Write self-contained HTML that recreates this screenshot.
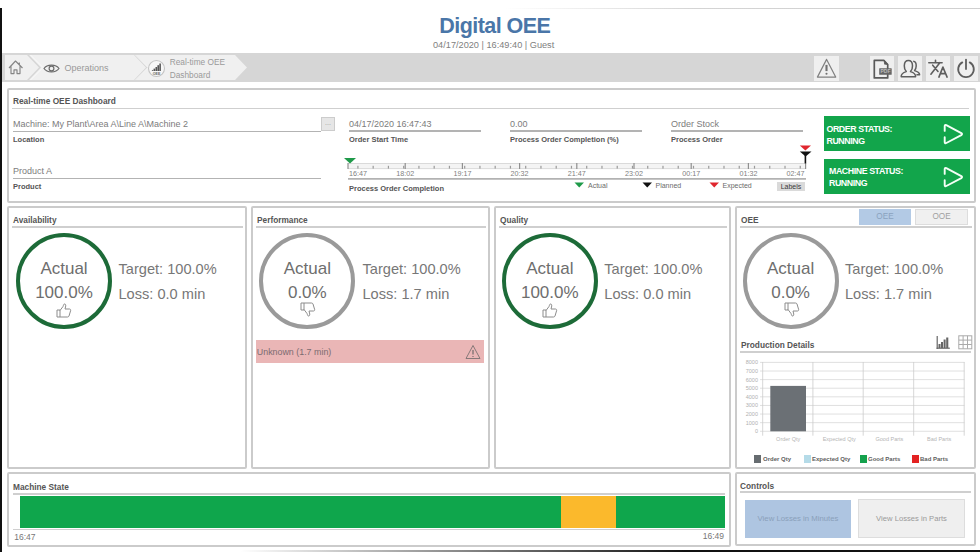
<!DOCTYPE html>
<html><head><meta charset="utf-8">
<style>
*{margin:0;padding:0;box-sizing:border-box}
html,body{width:980px;height:560px;overflow:hidden;background:#fff}
body{position:relative;font-family:"Liberation Sans",sans-serif;color:#707070}
.a{position:absolute;white-space:nowrap}
.pn{position:absolute;border:2px solid #cbcbcb;border-radius:2px;background:#fff}
.hd{position:absolute;font-weight:bold;font-size:8.3px;color:#555}
.ul{position:absolute;height:2px;background:#cfcfcf}
.lbl{position:absolute;font-weight:bold;font-size:7.5px;color:#555;white-space:nowrap}
.val{position:absolute;font-size:9px;color:#7c7c7c;white-space:nowrap}
.ibtn{position:absolute;top:56px;width:25px;height:25px;background:#efefef}
</style></head><body>

<!-- left black bar & bottom line -->
<div class="a" style="left:0;top:8px;width:2px;height:544px;background:#111"></div>
<div class="a" style="left:240px;top:550px;width:740px;height:2px;background:linear-gradient(90deg,rgba(0,0,0,0),#111 60%)"></div>

<div class="a" style="left:505px;top:8px;width:475px;height:1px;background:linear-gradient(90deg,rgba(200,200,200,0),#d4d4d4 40%,#d0d0d0)"></div>
<!-- title -->
<div class="a" style="left:439.3px;top:14px;font-size:21.5px;letter-spacing:-0.55px;font-weight:bold;color:#4a76a8">Digital OEE</div>
<div class="a" style="left:433px;top:40.3px;font-size:9.2px;color:#808080">04/17/2020 | 16:49:40 | Guest</div>

<!-- toolbar -->
<div class="a" style="left:2px;top:53px;width:978px;height:29px;background:#d6d6d6"></div>
<svg class="a" style="left:5px;top:55px" width="245" height="25" viewBox="0 0 245 25">
  <path d="M0 0 H22 L34 12.5 L22 25 H0 Z" fill="#f0f0f0"/>
  <path d="M24 0 H129 L141 12.5 L129 25 H24 L36 12.5 Z" fill="#f0f0f0"/>
  <path d="M131 0 H230 L242 12.5 L230 25 H131 L143 12.5 Z" fill="#f0f0f0"/>
  <path d="M25.5 0 L38 12.5 L25.5 25 M130.5 0 L143 12.5 L130.5 25" fill="none" stroke="#fafafa" stroke-width="1"/>
</svg>
<!-- home icon -->
<svg class="a" style="left:7px;top:59px" width="18" height="17" viewBox="0 0 18 17" fill="none" stroke="#858585" stroke-width="1.15" stroke-linejoin="round">
  <path d="M2 9 L8.5 2 L15.5 9 M4 7.3 V14.6 H7 V10.8 H10 V14.6 H13 V7.3 M12.3 3.6 V5.6"/>
</svg>
<!-- eye icon -->
<svg class="a" style="left:43px;top:62.5px" width="17" height="11" viewBox="0 0 17 11" fill="none" stroke="#6a6a6a" stroke-width="1.15">
  <path d="M1 5.5 C4 1 13 1 16 5.5 C13 10 4 10 1 5.5 Z"/><circle cx="8.5" cy="5.5" r="2.4"/>
</svg>
<div class="a" style="left:64.5px;top:63px;font-size:9px;color:#999">Operations</div>
<!-- oee icon -->
<svg class="a" style="left:147px;top:58.5px" width="19" height="19" viewBox="0 0 19 19">
  <circle cx="9.5" cy="9.5" r="8" fill="#f7f7f7" stroke="#c4c4c4" stroke-width="1.1"/>
  <path d="M4.5 12 L6.3 10.6 V12 Z" fill="#555"/>
  <rect x="6.6" y="9.6" width="1.6" height="2.4" fill="#555"/><rect x="8.5" y="8" width="1.6" height="4" fill="#555"/>
  <rect x="10.4" y="6.2" width="1.6" height="5.8" fill="#555"/><rect x="12.3" y="4.5" width="1.6" height="7.5" fill="#555"/>
  <text x="9.5" y="15.6" font-size="3.6" font-weight="bold" text-anchor="middle" fill="#666" font-family="Liberation Sans">OEE</text>
</svg>
<div class="a" style="left:169.7px;top:55.5px;font-size:8.3px;line-height:13.2px;color:#9a9a9a">Real-time OEE<br>Dashboard</div>

<!-- right icons -->
<div class="ibtn" style="left:814.3px;width:24.8px;height:24.6px"></div>
<svg class="a" style="left:814.3px;top:56px" width="25" height="25" viewBox="0 0 25 25" fill="none" stroke="#808080" stroke-width="1.2">
  <path d="M12.6 3.4 L21.7 21.1 H3.4 Z" stroke-linejoin="round"/><path d="M12.5 8.9 L12.5 15.1" stroke-width="2.1" stroke="#707070"/><circle cx="12.5" cy="17.8" r="1.05" fill="#707070" stroke="none"/>
</svg>
<div class="ibtn" style="left:869.7px;width:24.2px;height:24.8px"></div>
<svg class="a" style="left:870px;top:56px" width="25" height="25" viewBox="0 0 25 25" fill="none" stroke="#5a5a5a" stroke-width="1.7">
  <path d="M4.3 4.3 H13.8 L17.7 8.6 V21.9 H4.3 Z" stroke-linejoin="round"/>
  <path d="M14.2 4.6 L17.4 8.2 L14.6 8.2 Z" fill="#5a5a5a" stroke-width="0.8"/>
  <rect x="9.2" y="12.2" width="12.5" height="6.5" fill="#666" stroke="none" rx="0.5"/>
  <text x="15.45" y="17.4" font-size="5" font-weight="bold" text-anchor="middle" fill="#bbb" stroke="none" font-family="Liberation Sans">PDF</text>
</svg>
<div class="ibtn" style="left:897.8px;width:24.2px;height:24.8px"></div>
<svg class="a" style="left:898px;top:56px" width="25" height="25" viewBox="0 0 25 25" fill="none" stroke="#5e5e5e" stroke-width="1.5" stroke-linejoin="round">
  <path d="M3.2 20.8 C3 18 4.5 16.8 8.3 15.6 C6.8 14 6.2 12 6.3 9.8 C6.4 6.3 8.2 4.6 10.4 4.6 C12.6 4.6 14.4 6.3 14.5 9.8 C14.6 12 14 14 12.5 15.6 C16.3 16.8 17.8 18 17.6 20.8 Z"/>
  <path d="M15.2 5.3 C17 5.5 18.3 7.2 18.2 10 C18.1 12 17.6 13.5 16.6 14.6 C19.8 15.6 21.6 16.6 21.6 18.7 H18.4"/>
</svg>
<div class="ibtn" style="left:925.8px;width:24.3px;height:24.9px"></div>
<svg class="a" style="left:926px;top:56px" width="25" height="25" viewBox="0 0 25 25" fill="none" stroke="#5e5e5e" stroke-width="1.6" stroke-linecap="round">
  <path d="M2.8 6.7 H16.1 M9.5 4.3 V6.7 M13.8 6.7 L4.9 18.2 M6.7 9.2 L12 15.5"/>
  <path d="M12.9 21.1 L16.9 11.1 L21.1 21.1 M14.4 17.6 H19.5" stroke-linejoin="round"/>
</svg>
<div class="ibtn" style="left:953.7px;width:24.5px;height:24.9px"></div>
<svg class="a" style="left:954px;top:56px" width="25" height="25" viewBox="0 0 25 25" fill="none" stroke="#5e5e5e" stroke-width="1.8" stroke-linecap="round">
  <path d="M8.3 6.4 A7.8 7.8 0 1 0 15.7 6.4"/><path d="M12 3.6 V13"/>
</svg>

<!-- TOP PANEL -->
<div class="pn" style="left:7px;top:87.5px;width:969px;height:115px"></div>


<div class="hd" style="left:13px;top:96px">Real-time OEE Dashboard</div>
<div class="ul" style="left:12px;top:107.8px;width:957px;height:1.5px"></div>
<div class="val" style="left:13px;top:119px">Machine: My Plant\Area A\Line A\Machine 2</div>
<div class="a" style="left:13px;top:130.6px;width:308px;height:1.3px;background:#b3b3b3"></div>
<div class="a" style="left:321px;top:117px;width:14px;height:14px;background:#e6e6e6;border:1px solid #ccc;font-size:7px;color:#999;text-align:center;line-height:9px">...</div>
<div class="lbl" style="left:13px;top:135px">Location</div>
<div class="val" style="left:13px;top:166px">Product A</div>
<div class="a" style="left:13px;top:178.2px;width:308px;height:1.3px;background:#b3b3b3"></div>
<div class="lbl" style="left:13px;top:182px">Product</div>

<div class="val" style="left:349px;top:119px">04/17/2020 16:47:43</div>
<div class="a" style="left:349px;top:130.3px;width:132px;height:1.3px;background:#b3b3b3"></div>
<div class="lbl" style="left:349px;top:135px">Order Start Time</div>
<div class="val" style="left:510px;top:119px">0.00</div>
<div class="a" style="left:510px;top:130.3px;width:132px;height:1.3px;background:#b3b3b3"></div>
<div class="lbl" style="left:510px;top:135px">Process Order Completion (%)</div>
<div class="val" style="left:671px;top:119px">Order Stock</div>
<div class="a" style="left:671px;top:130.3px;width:132px;height:1.3px;background:#b3b3b3"></div>
<div class="lbl" style="left:671px;top:135px">Process Order</div>

<!-- timeline -->
<svg class="a" style="left:340px;top:143px" width="480" height="40" viewBox="0 0 480 40">
  <rect x="8" y="20.4" width="457.6" height="5.2" fill="#f4f4f4"/>
  <rect x="8" y="20" width="457.6" height="0.9" fill="#d6d6d6"/>
  <rect x="8" y="25.2" width="457.6" height="0.9" fill="#d6d6d6"/>
  <rect x="7.40" y="20" width="1.2" height="6" fill="#909090"/><rect x="64.60" y="20" width="1.2" height="6" fill="#909090"/><rect x="121.80" y="20" width="1.2" height="6" fill="#909090"/><rect x="179.00" y="20" width="1.2" height="6" fill="#909090"/><rect x="236.20" y="20" width="1.2" height="6" fill="#909090"/><rect x="293.40" y="20" width="1.2" height="6" fill="#909090"/><rect x="350.60" y="20" width="1.2" height="6" fill="#909090"/><rect x="407.80" y="20" width="1.2" height="6" fill="#909090"/><rect x="465.00" y="20" width="1.2" height="6" fill="#909090"/><rect x="17.31" y="22.8" width="1.2" height="2.8" fill="#9a9a9a"/><rect x="32.57" y="22.8" width="1.2" height="2.8" fill="#9a9a9a"/><rect x="47.82" y="22.8" width="1.2" height="2.8" fill="#9a9a9a"/><rect x="63.07" y="22.8" width="1.2" height="2.8" fill="#9a9a9a"/><rect x="78.33" y="22.8" width="1.2" height="2.8" fill="#9a9a9a"/><rect x="93.58" y="22.8" width="1.2" height="2.8" fill="#9a9a9a"/><rect x="108.83" y="22.8" width="1.2" height="2.8" fill="#9a9a9a"/><rect x="124.09" y="22.8" width="1.2" height="2.8" fill="#9a9a9a"/><rect x="139.34" y="22.8" width="1.2" height="2.8" fill="#9a9a9a"/><rect x="154.59" y="22.8" width="1.2" height="2.8" fill="#9a9a9a"/><rect x="169.85" y="22.8" width="1.2" height="2.8" fill="#9a9a9a"/><rect x="185.10" y="22.8" width="1.2" height="2.8" fill="#9a9a9a"/><rect x="200.35" y="22.8" width="1.2" height="2.8" fill="#9a9a9a"/><rect x="215.61" y="22.8" width="1.2" height="2.8" fill="#9a9a9a"/><rect x="230.86" y="22.8" width="1.2" height="2.8" fill="#9a9a9a"/><rect x="246.11" y="22.8" width="1.2" height="2.8" fill="#9a9a9a"/><rect x="261.37" y="22.8" width="1.2" height="2.8" fill="#9a9a9a"/><rect x="276.62" y="22.8" width="1.2" height="2.8" fill="#9a9a9a"/><rect x="291.87" y="22.8" width="1.2" height="2.8" fill="#9a9a9a"/><rect x="307.13" y="22.8" width="1.2" height="2.8" fill="#9a9a9a"/><rect x="322.38" y="22.8" width="1.2" height="2.8" fill="#9a9a9a"/><rect x="337.63" y="22.8" width="1.2" height="2.8" fill="#9a9a9a"/><rect x="352.89" y="22.8" width="1.2" height="2.8" fill="#9a9a9a"/><rect x="368.14" y="22.8" width="1.2" height="2.8" fill="#9a9a9a"/><rect x="383.39" y="22.8" width="1.2" height="2.8" fill="#9a9a9a"/><rect x="398.65" y="22.8" width="1.2" height="2.8" fill="#9a9a9a"/><rect x="413.90" y="22.8" width="1.2" height="2.8" fill="#9a9a9a"/><rect x="429.15" y="22.8" width="1.2" height="2.8" fill="#9a9a9a"/><rect x="444.41" y="22.8" width="1.2" height="2.8" fill="#9a9a9a"/><rect x="459.66" y="22.8" width="1.2" height="2.8" fill="#9a9a9a"/>
  <rect x="8" y="35.2" width="458" height="1.4" fill="#a0a0a0"/>
  <path d="M4 15 H16 L10 20.5 Z" fill="#1f9a4a"/>
  <path d="M459.8 2.4 H471 L465.4 7.6 Z" fill="#e0262e"/>
  <path d="M459.8 8.6 H471.5 L465.6 13.4 Z" fill="#111"/>
  <rect x="464.6" y="12" width="1.6" height="8.4" fill="#111"/>
</svg>
<div class="a" style="left:349px;top:168.9px;font-size:7.2px;color:#808080">16:47</div><div class="a" style="left:405.2px;top:168.9px;font-size:7.2px;color:#808080;transform:translateX(-50%)">18:02</div><div class="a" style="left:462.4px;top:168.9px;font-size:7.2px;color:#808080;transform:translateX(-50%)">19:17</div><div class="a" style="left:519.6px;top:168.9px;font-size:7.2px;color:#808080;transform:translateX(-50%)">20:32</div><div class="a" style="left:576.8px;top:168.9px;font-size:7.2px;color:#808080;transform:translateX(-50%)">21:47</div><div class="a" style="left:634.0px;top:168.9px;font-size:7.2px;color:#808080;transform:translateX(-50%)">23:02</div><div class="a" style="left:691.2px;top:168.9px;font-size:7.2px;color:#808080;transform:translateX(-50%)">00:17</div><div class="a" style="left:748.4px;top:168.9px;font-size:7.2px;color:#808080;transform:translateX(-50%)">01:32</div><div class="a" style="left:804.6px;top:168.9px;font-size:7.2px;color:#808080;transform:translateX(-100%)">02:47</div>
<div class="lbl" style="left:349px;top:184px">Process Order Completion</div>
<svg class="a" style="left:574px;top:182px" width="12" height="6"><path d="M0.5 0.5 H10 L5.25 5.5 Z" fill="#1f9a4a"/></svg>
<div class="a" style="left:588px;top:181.8px;font-size:7px;color:#6a6a6a">Actual</div>
<svg class="a" style="left:642px;top:182px" width="12" height="6"><path d="M0.5 0.5 H10 L5.25 5.5 Z" fill="#111"/></svg>
<div class="a" style="left:655.5px;top:181.8px;font-size:7px;color:#6a6a6a">Planned</div>
<svg class="a" style="left:709px;top:182px" width="12" height="6"><path d="M0.5 0.5 H10 L5.25 5.5 Z" fill="#e0262e"/></svg>
<div class="a" style="left:722.5px;top:181.8px;font-size:7px;color:#6a6a6a">Expected</div>
<div class="a" style="left:777px;top:182.3px;width:28px;height:9px;background:#dadada;font-size:7px;color:#3a3a3a;text-align:center;line-height:9px">Labels</div>

<!-- status -->
<div class="a" style="left:824px;top:116.2px;width:146.3px;height:35px;background:#12a54b"></div>
<div class="a" style="left:826.5px;top:122.6px;font-size:8.8px;letter-spacing:-0.42px;line-height:12px;font-weight:bold;color:#fff">ORDER STATUS:<br>RUNNING</div>
<svg class="a" style="left:941px;top:122px" width="24" height="24" viewBox="0 0 24 24" fill="none" stroke="#f4fff6" stroke-width="1.9" stroke-linejoin="round" stroke-linecap="round"><path d="M3.7 8.9 V4.2 Q3.7 2.4 5.3 3.2 L20.3 11.1 Q21.8 12.1 20.3 13.1 L5.3 21 Q3.7 21.8 3.7 20 V15.2"/></svg>
<div class="a" style="left:824px;top:158.9px;width:146.3px;height:35px;background:#12a54b"></div>
<div class="a" style="left:829px;top:164.5px;font-size:8.8px;letter-spacing:-0.42px;line-height:12px;font-weight:bold;color:#fff">MACHINE STATUS:<br>RUNNING</div>
<svg class="a" style="left:941px;top:165px" width="24" height="24" viewBox="0 0 24 24" fill="none" stroke="#f4fff6" stroke-width="1.9" stroke-linejoin="round" stroke-linecap="round"><path d="M3.7 8.9 V4.2 Q3.7 2.4 5.3 3.2 L20.3 11.1 Q21.8 12.1 20.3 13.1 L5.3 21 Q3.7 21.8 3.7 20 V15.2"/></svg>
<div class="pn" style="left:7px;top:206px;width:240px;height:263px"></div>
<div class="hd" style="left:13px;top:215px">Availability</div>
<div class="ul" style="left:12px;top:225.5px;width:231px"></div>
<div class="a" style="left:16px;top:233px;width:96px;height:96px;border-radius:50%;border:4.5px solid #1d6b38"></div>
<div class="a" style="left:24px;top:257px;width:80px;text-align:center;font-size:17px;line-height:23.7px;color:#6e6e6e">Actual<br>100.0%</div>
<svg class="a" style="left:56px;top:303px" width="16" height="16" viewBox="0 0 16 16" fill="none" stroke="#8c8c8c" stroke-width="1" stroke-linejoin="round"><path d="M1 7 H4 V14 H1 Z M4 7.5 L7 3.5 C7.5 2.5 7.5 1 8.5 1 C9.8 1 10 2.5 9.5 4 L9 6 H13.5 C14.5 6 15 7 14.5 8 L13 13 C12.7 13.7 12.2 14 11.5 14 H4"/></svg>
<div class="a" style="left:118.5px;top:256.7px;font-size:14.6px;line-height:25.5px;color:#777">Target: 100.0%<br>Loss: 0.0 min</div>
<div class="pn" style="left:251px;top:206px;width:239px;height:263px"></div>
<div class="hd" style="left:257px;top:215px">Performance</div>
<div class="ul" style="left:256px;top:225.5px;width:230px"></div>
<div class="a" style="left:258.6px;top:233px;width:96px;height:96px;border-radius:50%;border:4.5px solid #9a9a9a"></div>
<div class="a" style="left:267.3px;top:257px;width:80px;text-align:center;font-size:17px;line-height:23.7px;color:#6e6e6e">Actual<br>0.0%</div>
<svg class="a" style="left:300px;top:302px" width="16" height="16" viewBox="0 0 16 16" fill="none" stroke="#8c8c8c" stroke-width="1" stroke-linejoin="round"><g transform="translate(0,15) scale(1,-1)"><path d="M1 7 H4 V14 H1 Z M4 7.5 L7 3.5 C7.5 2.5 7.5 1 8.5 1 C9.8 1 10 2.5 9.5 4 L9 6 H13.5 C14.5 6 15 7 14.5 8 L13 13 C12.7 13.7 12.2 14 11.5 14 H4"/></g></svg>
<div class="a" style="left:362.5px;top:256.7px;font-size:14.6px;line-height:25.5px;color:#777">Target: 100.0%<br>Loss: 1.7 min</div>
<div class="pn" style="left:494px;top:206px;width:237px;height:263px"></div>
<div class="hd" style="left:500px;top:215px">Quality</div>
<div class="ul" style="left:499px;top:225.5px;width:228px"></div>
<div class="a" style="left:501.6px;top:233px;width:96px;height:96px;border-radius:50%;border:4.5px solid #1d6b38"></div>
<div class="a" style="left:509.8px;top:257px;width:80px;text-align:center;font-size:17px;line-height:23.7px;color:#6e6e6e">Actual<br>100.0%</div>
<svg class="a" style="left:542px;top:303px" width="16" height="16" viewBox="0 0 16 16" fill="none" stroke="#8c8c8c" stroke-width="1" stroke-linejoin="round"><path d="M1 7 H4 V14 H1 Z M4 7.5 L7 3.5 C7.5 2.5 7.5 1 8.5 1 C9.8 1 10 2.5 9.5 4 L9 6 H13.5 C14.5 6 15 7 14.5 8 L13 13 C12.7 13.7 12.2 14 11.5 14 H4"/></svg>
<div class="a" style="left:604.3px;top:256.7px;font-size:14.6px;line-height:25.5px;color:#777">Target: 100.0%<br>Loss: 0.0 min</div>
<div class="pn" style="left:735px;top:206px;width:241px;height:263px"></div>
<div class="hd" style="left:741px;top:215px">OEE</div>
<div class="ul" style="left:740px;top:225.5px;width:232px"></div>
<div class="a" style="left:742.8px;top:233px;width:96px;height:96px;border-radius:50%;border:4.5px solid #9a9a9a"></div>
<div class="a" style="left:750.6px;top:257px;width:80px;text-align:center;font-size:17px;line-height:23.7px;color:#6e6e6e">Actual<br>0.0%</div>
<svg class="a" style="left:783.5px;top:302px" width="16" height="16" viewBox="0 0 16 16" fill="none" stroke="#8c8c8c" stroke-width="1" stroke-linejoin="round"><g transform="translate(0,15) scale(1,-1)"><path d="M1 7 H4 V14 H1 Z M4 7.5 L7 3.5 C7.5 2.5 7.5 1 8.5 1 C9.8 1 10 2.5 9.5 4 L9 6 H13.5 C14.5 6 15 7 14.5 8 L13 13 C12.7 13.7 12.2 14 11.5 14 H4"/></g></svg>
<div class="a" style="left:845px;top:256.7px;font-size:14.6px;line-height:25.5px;color:#777">Target: 100.0%<br>Loss: 1.7 min</div>
<div class="a" style="left:256px;top:339.5px;width:228px;height:23px;background:#eab6b6"></div>
<div class="a" style="left:256.8px;top:346.8px;font-size:8.9px;color:#7b6b70">Unknown (1.7 min)</div>
<svg class="a" style="left:465px;top:344px" width="16" height="16" viewBox="0 0 16 16" fill="none" stroke="#7a7070" stroke-width="0.9"><path d="M8 1.5 L15 14.5 H1 Z" stroke-linejoin="round"/><path d="M8 6 V10.5" stroke-width="1.3"/><circle cx="8" cy="12.5" r="0.6" fill="#555" stroke="none"/></svg>
<div class="a" style="left:859px;top:208.5px;width:52px;height:16px;background:#b3cae5;font-size:8.2px;color:#8aa2be;text-align:center;line-height:16px">OEE</div>
<div class="a" style="left:915px;top:208.5px;width:53px;height:16px;background:#f0f0f0;border:1px solid #ddd;font-size:8.2px;color:#a0a0a0;text-align:center;line-height:14px">OOE</div>
<div class="hd" style="left:741px;top:340px">Production Details</div>
<div class="ul" style="left:740px;top:350.5px;width:231px"></div>
<svg class="a" style="left:936px;top:335px" width="15" height="15" viewBox="0 0 15 15" fill="#666"><rect x="0.6" y="1" width="1.2" height="13"/><rect x="0.6" y="12.6" width="13.2" height="1.2"/><rect x="2.5" y="9" width="2" height="4"/><rect x="5" y="7" width="2" height="6"/><rect x="7.6" y="4.5" width="2" height="8.5"/><rect x="10.2" y="2.5" width="2.1" height="10.5"/></svg>
<svg class="a" style="left:958px;top:335px" width="15" height="15" viewBox="0 0 15 15" fill="none" stroke="#aaa" stroke-width="1"><rect x="0.8" y="0.8" width="13" height="13"/><path d="M5.1 0.8 V13.8 M9.5 0.8 V13.8 M0.8 5.1 H13.8 M0.8 9.5 H13.8"/></svg>
<svg class="a" style="left:740px;top:355px" width="235" height="90" viewBox="0 0 235 90"><line x1="20" y1="7.40" x2="224.5" y2="7.40" stroke="#d8d8d8" stroke-width="0.8"/><text x="18" y="9.40" font-size="5.5" text-anchor="end" fill="#b0b0b0" font-family="Liberation Sans">8000</text><line x1="20" y1="16.01" x2="224.5" y2="16.01" stroke="#d8d8d8" stroke-width="0.8"/><text x="18" y="18.01" font-size="5.5" text-anchor="end" fill="#b0b0b0" font-family="Liberation Sans">7000</text><line x1="20" y1="24.62" x2="224.5" y2="24.62" stroke="#d8d8d8" stroke-width="0.8"/><text x="18" y="26.62" font-size="5.5" text-anchor="end" fill="#b0b0b0" font-family="Liberation Sans">6000</text><line x1="20" y1="33.23" x2="224.5" y2="33.23" stroke="#d8d8d8" stroke-width="0.8"/><text x="18" y="35.23" font-size="5.5" text-anchor="end" fill="#b0b0b0" font-family="Liberation Sans">5000</text><line x1="20" y1="41.84" x2="224.5" y2="41.84" stroke="#d8d8d8" stroke-width="0.8"/><text x="18" y="43.84" font-size="5.5" text-anchor="end" fill="#b0b0b0" font-family="Liberation Sans">4000</text><line x1="20" y1="50.45" x2="224.5" y2="50.45" stroke="#d8d8d8" stroke-width="0.8"/><text x="18" y="52.45" font-size="5.5" text-anchor="end" fill="#b0b0b0" font-family="Liberation Sans">3000</text><line x1="20" y1="59.06" x2="224.5" y2="59.06" stroke="#d8d8d8" stroke-width="0.8"/><text x="18" y="61.06" font-size="5.5" text-anchor="end" fill="#b0b0b0" font-family="Liberation Sans">2000</text><line x1="20" y1="67.67" x2="224.5" y2="67.67" stroke="#d8d8d8" stroke-width="0.8"/><text x="18" y="69.67" font-size="5.5" text-anchor="end" fill="#b0b0b0" font-family="Liberation Sans">1000</text><line x1="20" y1="76.28" x2="224.5" y2="76.28" stroke="#d8d8d8" stroke-width="0.8"/><text x="18" y="78.28" font-size="5.5" text-anchor="end" fill="#b0b0b0" font-family="Liberation Sans">0</text><line x1="22.7" y1="7" x2="22.7" y2="80.7" stroke="#ccc" stroke-width="0.8"/><line x1="72.9" y1="7" x2="72.9" y2="80.7" stroke="#ccc" stroke-width="0.8"/><line x1="123.2" y1="7" x2="123.2" y2="80.7" stroke="#ccc" stroke-width="0.8"/><line x1="173.7" y1="7" x2="173.7" y2="80.7" stroke="#ccc" stroke-width="0.8"/><line x1="224.2" y1="7" x2="224.2" y2="80.7" stroke="#ccc" stroke-width="0.8"/><rect x="30.3" y="30.9" width="35.7" height="45.4" fill="#6b7075"/><text x="48.2" y="86" font-size="5.5" text-anchor="middle" fill="#b5b5b5" font-family="Liberation Sans">Order Qty</text><text x="99.2" y="86" font-size="5.5" text-anchor="middle" fill="#b5b5b5" font-family="Liberation Sans">Expected Qty</text><text x="149.4" y="86" font-size="5.5" text-anchor="middle" fill="#b5b5b5" font-family="Liberation Sans">Good Parts</text><text x="199.2" y="86" font-size="5.5" text-anchor="middle" fill="#b5b5b5" font-family="Liberation Sans">Bad Parts</text></svg>
<div class="a" style="left:754px;top:455px;width:7px;height:8px;background:#666c70"></div>
<div class="a" style="left:763px;top:455.7px;font-size:6px;font-weight:bold;color:#606060">Order Qty</div>
<div class="a" style="left:803.5px;top:455px;width:7px;height:8px;background:#b5dbe8"></div>
<div class="a" style="left:812px;top:455.7px;font-size:6px;font-weight:bold;color:#606060">Expected Qty</div>
<div class="a" style="left:859.5px;top:455px;width:7px;height:8px;background:#14a14d"></div>
<div class="a" style="left:868px;top:455.7px;font-size:6px;font-weight:bold;color:#606060">Good Parts</div>
<div class="a" style="left:911.5px;top:455px;width:7.5px;height:8px;background:#e32222"></div>
<div class="a" style="left:920px;top:455.7px;font-size:6px;font-weight:bold;color:#606060">Bad Parts</div>
<div class="pn" style="left:7px;top:472px;width:724px;height:75px"></div>
<div class="hd" style="left:13px;top:482px">Machine State</div>
<div class="ul" style="left:13px;top:493px;width:712px;height:1.5px"></div>
<div class="a" style="left:20px;top:496px;width:540.5px;height:32px;background:#0fa64c"></div>
<div class="a" style="left:560.5px;top:496px;width:55px;height:32px;background:#fbb92c"></div>
<div class="a" style="left:615.5px;top:496px;width:109.5px;height:32px;background:#0fa64c"></div>
<div class="a" style="left:13px;top:528.6px;width:712px;height:1px;background:#cfcfcf"></div>
<div class="a" style="left:14.3px;top:532.4px;font-size:8.5px;color:#777">16:47</div>
<div class="a" style="left:702.7px;top:530.7px;font-size:8.5px;color:#777">16:49</div>
<div class="pn" style="left:735px;top:472px;width:241px;height:74px"></div>
<div class="hd" style="left:740px;top:481px">Controls</div>
<div class="ul" style="left:740px;top:491px;width:231px"></div>
<div class="a" style="left:745px;top:500px;width:106px;height:38px;background:#aec5e1;font-size:7.75px;color:#8aa0ba;text-align:center;line-height:38px">View Losses in Minutes</div>
<div class="a" style="left:858px;top:499px;width:107px;height:39px;background:#efefef;border:1px solid #ddd;font-size:7.65px;color:#9a9a9a;text-align:center;line-height:37px">View Losses in Parts</div>

</body></html>
